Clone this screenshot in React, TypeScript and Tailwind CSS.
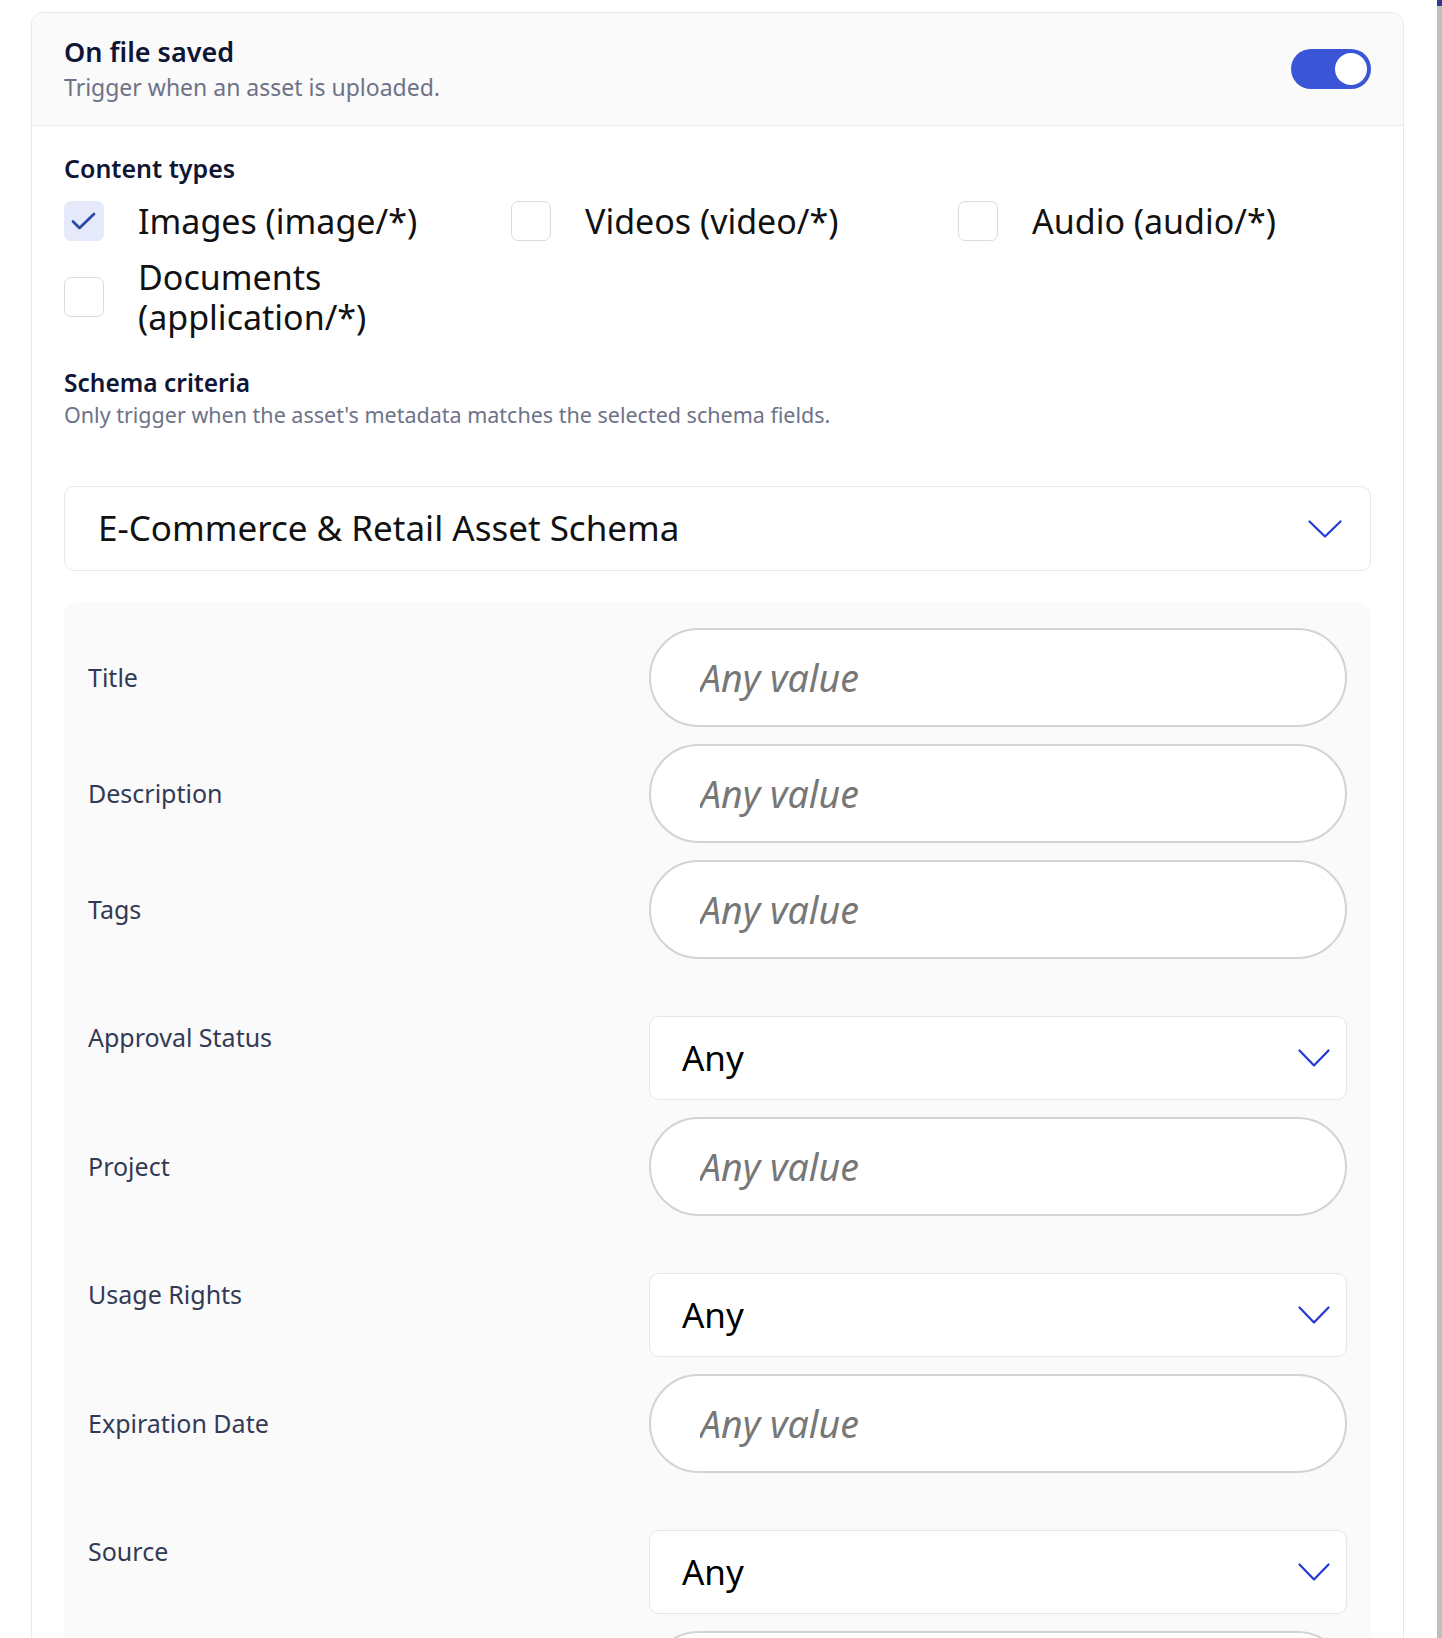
const fields: { label: string; kind: "text" | "select" }[] = [
  { label: "Title", kind: "text" },
  { label: "Description", kind: "text" },
  { label: "Tags", kind: "text" },
  { label: "Approval Status", kind: "select" },
  { label: "Project", kind: "text" },
  { label: "Usage Rights", kind: "select" },
  { label: "Expiration Date", kind: "text" },
  { label: "Source", kind: "select" },
  { label: "Campaign", kind: "text" },
]

const contentTypes = [
  { label: "Images (image/*)", checked: true },
  { label: "Videos (video/*)", checked: false },
  { label: "Audio (audio/*)", checked: false },
  { label: "Documents (application/*)", checked: false },
]

function Chevron({ w = 34 }: { w?: number }) {
  return (
    <svg width={w} height="18" viewBox={`0 0 ${w} 18`} fill="none" className="shrink-0">
      <polyline
        points={`1.5,1.5 ${w / 2},16.5 ${w - 1.5},1.5`}
        stroke="#2137d6"
        strokeWidth="2.2"
        strokeLinecap="round"
        strokeLinejoin="round"
      />
    </svg>
  )
}

function Box({ checked }: { checked: boolean }) {
  if (checked) {
    return (
      <span className="flex h-10 w-10 shrink-0 items-center justify-center rounded-[7px] bg-[#e6e9fa]">
        <svg width="40" height="40" viewBox="0 0 40 40" fill="none">
          <polyline
            points="9,20.5 15.5,27 30,13"
            stroke="#2a4aa6"
            strokeWidth="2.8"
            strokeLinecap="round"
            strokeLinejoin="round"
          />
        </svg>
      </span>
    )
  }
  return <span className="h-10 w-10 shrink-0 rounded-[7px] border-[1.5px] border-[#dcdcdc] bg-white" />
}

function Field({ label, kind }: { label: string; kind: "text" | "select" }) {
  return (
    <div className="grid grid-cols-[537px_1fr] items-center gap-x-6">
      <span className="text-[25px] text-[#333a56]">{label}</span>
      {kind === "text" ? (
        <input
          placeholder="Any value"
          className="h-[99px] w-full rounded-full border-2 border-[#d3d3d3] bg-white pl-[49px] text-[37.5px] italic outline-none placeholder:text-[#777777]"
        />
      ) : (
        <div className="pt-10">
          <div className="flex h-[84px] items-center justify-between rounded-[10px] border-[1.5px] border-[#e6e6e6] bg-white pl-[32px] pr-[16px]">
            <span className="text-[35px] text-black">Any</span>
            <Chevron w={32} />
          </div>
        </div>
      )}
    </div>
  )
}

export default function App() {
  return (
    <div className="flex h-[1638px] overflow-hidden bg-white font-['Noto_Sans',sans-serif]">
      <div className="flex-1 pl-[31px] pr-[33px] pt-3">
        <div className="rounded-xl border border-[#e9e9e9] bg-white">
          <div className="flex items-center justify-between rounded-t-xl border-b border-[#ebebeb] bg-[#fafafa] px-8 py-[23px]">
            <div>
              <h2 className="text-[27px] font-semibold leading-[32px] text-[#0f1535]">On file saved</h2>
              <p className="mt-1 text-[23px] leading-[30px] text-[#6e7287]">Trigger when an asset is uploaded.</p>
            </div>
            <div className="flex h-10 w-20 items-center justify-end rounded-full bg-[#3a55d6] pr-1">
              <span className="h-8 w-8 rounded-full bg-white" />
            </div>
          </div>

          <div className="px-8 pt-[27px]">
            <h3 className="text-[25px] font-semibold leading-[30px] text-[#0f1535]">Content types</h3>
            <div className="mt-[18px] grid grid-cols-3 gap-x-[34px] gap-y-4">
              {contentTypes.map((c) => (
                <label key={c.label} className="flex items-center gap-[34px]">
                  <Box checked={c.checked} />
                  <span className="text-[34px] leading-[40px] text-[#111111]">{c.label}</span>
                </label>
              ))}
            </div>

            <h3 className="mt-[31px] text-[24.5px] font-semibold leading-[30px] text-[#0f1535]">Schema criteria</h3>
            <p className="mt-[2px] text-[21.5px] leading-[30px] text-[#6e7287]">
              Only trigger when the asset's metadata matches the selected schema fields.
            </p>

            <div className="mt-[56px] flex h-[85px] items-center justify-between rounded-[10px] border-[1.5px] border-[#e8e8e8] bg-white pl-[33px] pr-[28px]">
              <span className="text-[35px] text-[#111111]">E-Commerce &amp; Retail Asset Schema</span>
              <Chevron />
            </div>

            <div className="mt-8 flex flex-col gap-[17px] rounded-xl bg-[#fafafa] px-6 pb-6 pt-[25px]">
              {fields.map((f) => (
                <Field key={f.label} label={f.label} kind={f.kind} />
              ))}
            </div>
          </div>
        </div>
      </div>
      <div className="flex w-[5px] flex-col">
        <div className="h-[6px] bg-[#2d3a9a]" />
        <div className="flex-1 bg-[#bfbfbf]" />
      </div>
    </div>
  )
}
